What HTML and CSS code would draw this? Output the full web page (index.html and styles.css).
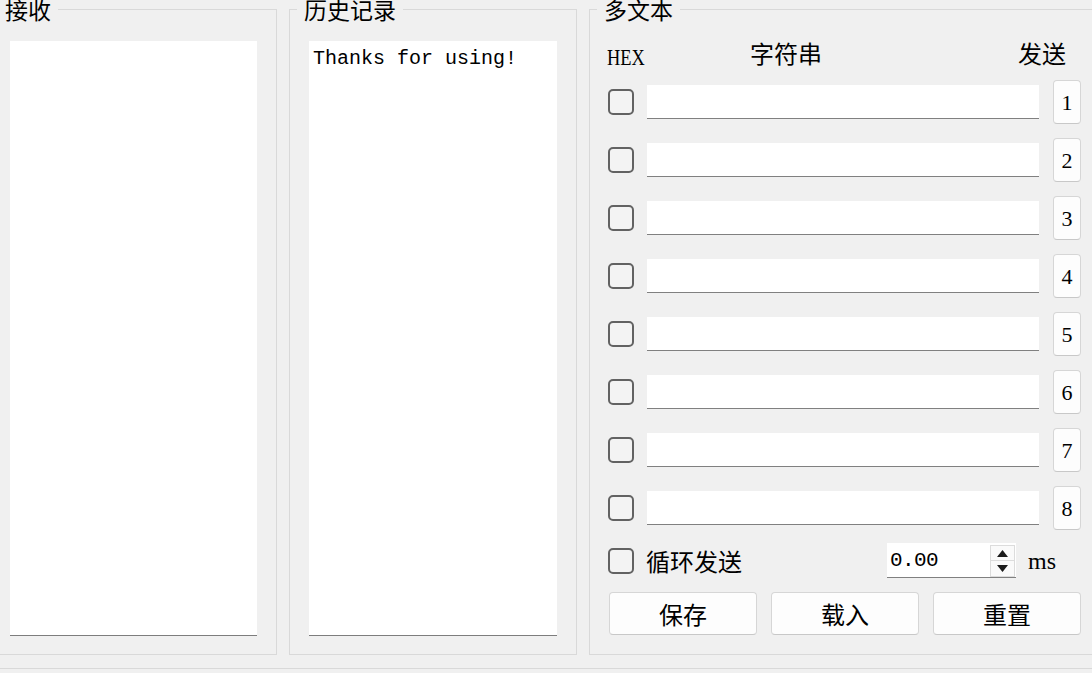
FILE: index.html
```html
<!DOCTYPE html>
<html lang="zh-CN">
<head>
<meta charset="utf-8">
<title>串口助手</title>
<link rel="stylesheet" href="styles.css">
</head>
<body>
<div class="window">
  <div class="panels">
    <fieldset class="group g-recv">
      <legend>接收</legend>
      <div class="group-body">
        <div class="textedit"></div>
      </div>
    </fieldset>
    <fieldset class="group g-hist">
      <legend>历史记录</legend>
      <div class="group-body">
        <div class="textedit mono">Thanks for using!</div>
      </div>
    </fieldset>
    <fieldset class="group g-multi">
      <legend>多文本</legend>
      <div class="multi-body">
        <div class="hdr">
          <span class="hdr-hex"><span class="hex-text">HEX</span></span>
          <span class="hdr-str">字符串</span>
          <span class="hdr-send">发送</span>
        </div>
        <div class="rows">
          <div class="row"><span class="cb"></span><span class="lineedit"></span><button class="num">1</button></div>
          <div class="row"><span class="cb"></span><span class="lineedit"></span><button class="num">2</button></div>
          <div class="row"><span class="cb"></span><span class="lineedit"></span><button class="num">3</button></div>
          <div class="row"><span class="cb"></span><span class="lineedit"></span><button class="num">4</button></div>
          <div class="row"><span class="cb"></span><span class="lineedit"></span><button class="num">5</button></div>
          <div class="row"><span class="cb"></span><span class="lineedit"></span><button class="num">6</button></div>
          <div class="row"><span class="cb"></span><span class="lineedit"></span><button class="num">7</button></div>
          <div class="row"><span class="cb"></span><span class="lineedit"></span><button class="num">8</button></div>
        </div>
        <div class="loop">
          <span class="cb"></span>
          <span class="loop-label">循环发送</span>
          <div class="spin">
            <span class="spin-val">0.00</span>
            <div class="spin-btns">
              <span class="spin-up"><svg width="11" height="7" viewBox="0 0 11 7"><polygon points="5.5,0 11,7 0,7" fill="#1a1a1a"/></svg></span>
              <span class="spin-down"><svg width="11" height="7" viewBox="0 0 11 7"><polygon points="0,0 11,0 5.5,7" fill="#1a1a1a"/></svg></span>
            </div>
          </div>
          <span class="ms">ms</span>
        </div>
        <div class="actions">
          <button class="btn">保存</button>
          <button class="btn">载入</button>
          <button class="btn">重置</button>
        </div>
      </div>
    </fieldset>
  </div>
  <div class="statusbar"></div>
</div>
</body>
</html>
```
FILE: styles.css
```css
html, body {
  margin: 0;
  padding: 0;
  background: #f0f0f0;
  overflow: hidden;
}
body {
  width: 1092px;
  height: 673px;
  font-family: "Noto Sans CJK SC", "Noto Sans", sans-serif;
  font-size: 24px;
  color: #000;
}
.window {
  display: flex;
  flex-direction: column;
}
.panels {
  display: flex;
  gap: 12px;
  margin-left: -10px;
  margin-top: -2px;
  align-items: stretch;
}
.group {
  margin: 0;
  padding: 0;
  min-width: 0;
  border: 1px solid #d9d9d9;
  box-sizing: border-box;
}
.group legend {
  margin-left: 7px;
  padding: 0 7px;
  font-size: 23px;
  line-height: 23px;
  height: 23px;
}
.g-recv { width: 287px; flex: none; }
.g-hist { width: 288px; flex: none; }
.g-multi { width: 512px; flex: none; }

.group-body {
  padding: 20px 19px 18px 19px;
}
.textedit {
  height: 595px;
  background: #fff;
  border-bottom: 1px solid #7d7d7d;
  box-sizing: border-box;
  padding: 6px 4px;
}
.mono {
  font-family: "Liberation Mono", "DejaVu Sans Mono", monospace;
  font-size: 20px;
  line-height: 24px;
}

.multi-body {
  padding: 20px 19px 18px 18px;
}
.hdr {
  display: flex;
  height: 23px;
  line-height: 23px;
  align-items: center;
}
.hdr-hex {
  margin-left: -1px;
  width: 143px;
  height: 23px;
}
.hex-text {
  display: inline-block;
  font-family: "Liberation Serif", serif;
  font-size: 23px;
  line-height: 23px;
  transform: scaleX(0.8);
  transform-origin: left center;
  position: relative;
  top: 2px;
}
.hdr-str {
  flex: 1;
}
.hdr-send {
  margin-right: 15px;
}
.rows {
  margin-top: 16px;
  display: flex;
  flex-direction: column;
  gap: 14px;
}
.row {
  display: flex;
  align-items: center;
  height: 44px;
}
.cb {
  width: 26px;
  height: 26px;
  box-sizing: border-box;
  border: 2px solid #626262;
  border-radius: 5px;
  background: #f3f3f3;
  flex: none;
}
.lineedit {
  margin-left: 13px;
  width: 392px;
  height: 34px;
  background: #fff;
  border-bottom: 1px solid #808080;
  box-sizing: border-box;
  flex: none;
}
.num {
  margin-left: 14px;
  width: 28px;
  height: 44px;
  padding: 2px 0 0 0;
  background: #fdfdfd;
  border: 1px solid #d6d6d6;
  border-bottom-color: #c8c8c8;
  border-radius: 4px;
  font-family: "Liberation Serif", serif;
  font-size: 22px;
  color: #000;
  flex: none;
}
.loop {
  margin-top: 13px;
  display: flex;
  align-items: center;
  height: 35px;
}
.loop-label {
  margin-left: 12px;
  line-height: 24px;
}
.spin {
  margin-left: auto;
  width: 129px;
  height: 35px;
  background: #fff;
  border-bottom: 1px solid #808080;
  box-sizing: border-box;
  display: flex;
  align-items: center;
  padding: 0 1px 0 3px;
}
.spin-val {
  flex: 1;
  font-family: "Liberation Mono", "DejaVu Sans Mono", monospace;
  font-size: 21px;
  line-height: 24px;
  letter-spacing: -0.6px;
  padding-top: 2px;
}
.spin-btns {
  align-self: flex-start;
  margin-top: 2px;
  width: 25px;
  display: flex;
  flex-direction: column;
}
.spin-up, .spin-down {
  height: 16px;
  box-sizing: border-box;
  background: #fafafa;
  border: 1px solid #dcdcdc;
  display: flex;
  align-items: center;
  justify-content: center;
}
.spin-down {
  border-top: none;
}
.ms {
  margin-left: 12px;
  width: 53px;
  font-family: "Liberation Serif", serif;
  font-size: 24px;
  line-height: 24px;
}
.actions {
  margin-top: 14px;
  display: flex;
  gap: 14px;
  padding-left: 1px;
}
.btn {
  flex: 1;
  height: 43px;
  padding: 0;
  background: #fdfdfd;
  border: 1px solid #d6d6d6;
  border-bottom-color: #c8c8c8;
  border-radius: 4px;
  font-family: "Noto Sans CJK SC", sans-serif;
  font-size: 24px;
  color: #000;
}
.statusbar {
  margin-top: 13px;
  border-top: 1px solid #d9d9d9;
  height: 5px;
}
```
